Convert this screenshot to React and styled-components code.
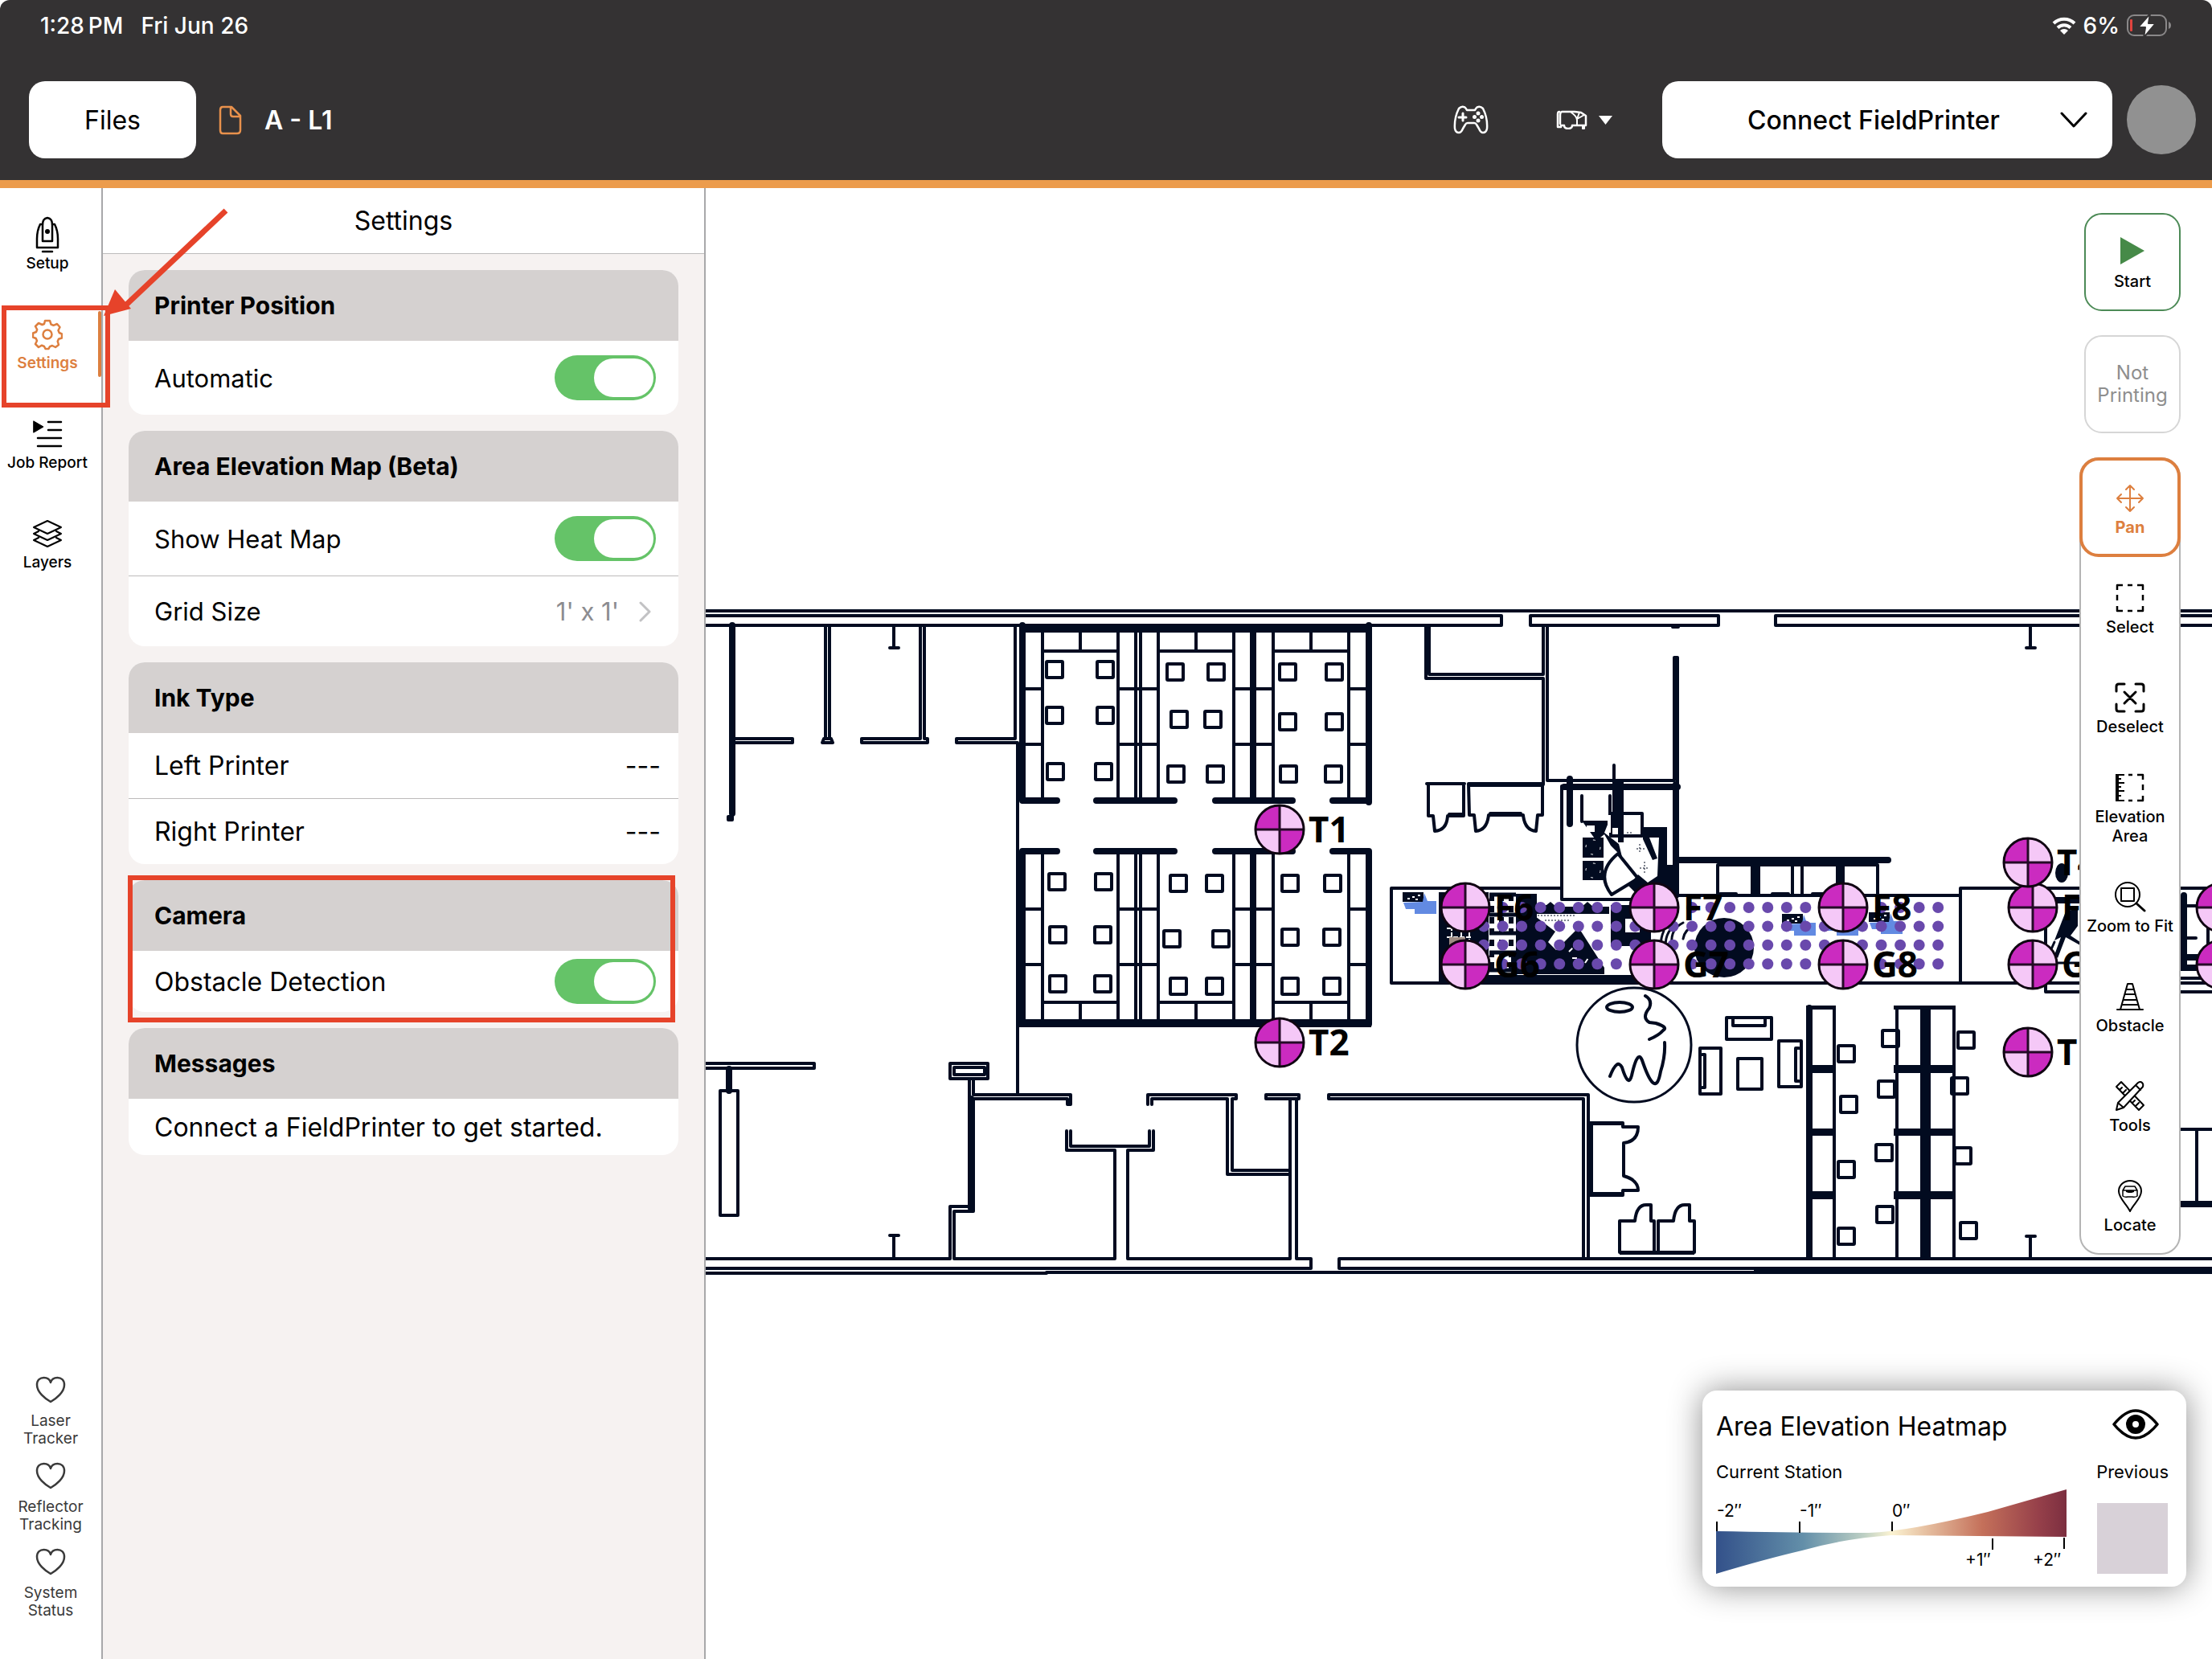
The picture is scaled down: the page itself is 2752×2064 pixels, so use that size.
import React, { useState } from 'react'
import styled, { createGlobalStyle, css } from 'styled-components'

const INK = '#020b20'
const ORANGE = '#dd7f3f'
const RED = '#e6432a'

const GlobalStyle = createGlobalStyle`
  * { box-sizing: border-box; }
  body {
    margin: 0;
    background: #fff;
    color: #000;
    font-family: Inter, "Liberation Sans", sans-serif;
  }
  button, select, input { font: inherit; color: inherit; margin: 0; }
  button { background: none; border: 0; padding: 0; cursor: pointer; }
`

/* ---------- page ---------- */

const Page = styled.div`
  display: flex;
  flex-direction: column;
  min-height: 100vh;
`

const Header = styled.header`
  background: #343233;
  color: #fff;
  border-bottom: 10px solid #ec9c4c;
  border-radius: 12px 12px 0 0;
`

const StatusBar = styled.div`
  display: flex;
  align-items: center;
  justify-content: space-between;
  height: 64px;
  padding: 0 50px;
  font-size: 28px;
  font-weight: 500;
`

const StatusGroup = styled.div`
  display: flex;
  align-items: center;
  gap: ${p => p.$gap}px;
`

const TopBar = styled.div`
  display: flex;
  align-items: center;
  height: 160px;
  padding: 10px 20px 0 36px;
`

const FilesButton = styled.button`
  width: 208px;
  height: 96px;
  border-radius: 20px;
  background: #fff;
  color: #000;
  font-size: 32px;
`

const FileName = styled.h1`
  flex: 1;
  display: flex;
  align-items: center;
  gap: 28px;
  margin: 0 0 0 28px;
  font-size: 32px;
  font-weight: 600;
`

const BarButton = styled.button`
  display: flex;
  align-items: center;
  gap: 14px;
  margin-right: ${p => p.$after}px;
`

const Connect = styled.label`
  display: grid;
  align-items: center;
  width: 560px;
  height: 96px;
  margin-right: 18px;
  border-radius: 20px;
  background: #fff;
  color: #000;

  select {
    grid-area: 1 / 1;
    height: 100%;
    padding: 0 34px 0 0;
    border: 0;
    border-radius: 20px;
    background: transparent;
    appearance: none;
    text-align: center;
    text-align-last: center;
    font-size: 32px;
    font-weight: 500;
  }
  svg {
    grid-area: 1 / 1;
    justify-self: end;
    margin-right: 31px;
    pointer-events: none;
  }
`

const Avatar = styled.button`
  width: 86px;
  height: 86px;
  border-radius: 50%;
  background: #919191;
`

const Body = styled.div`
  flex: 1;
  display: flex;
`

/* ---------- left rail ---------- */

const SideNav = styled.nav`
  display: flex;
  flex-direction: column;
  justify-content: space-between;
  width: 128px;
  padding: 34px 0 31px;
  border-right: 2px solid #a8a8aa;
  background: #fff;
`

const NavItem = styled.button`
  position: relative;
  display: flex;
  flex-direction: column;
  align-items: center;
  width: 118px;
  height: 124px;
  font-size: 19px;
  line-height: 24px;
  font-weight: 500;
  white-space: nowrap;

  svg { height: 48px; }

  ${p => p.$active && css`
    color: ${ORANGE};
    font-weight: 600;
    &::after {
      content: '';
      position: absolute;
      top: -5px;
      right: -8px;
      width: 4px;
      height: 82px;
      border-radius: 2px;
      background: ${ORANGE};
    }
  `}
`

const Health = styled.div`
  display: flex;
  flex-direction: column;
  align-items: center;
  height: 107px;
  padding: 0 18px;
  color: #3a3a3a;
  font-size: 19px;
  line-height: 22px;
  text-align: center;

  svg { margin-bottom: 11px; }
`

/* ---------- settings panel ---------- */

const Panel = styled.aside`
  width: 750px;
  border-right: 2px solid #a8a8aa;
  background: #f6f2f1;
`

const PanelTitle = styled.h2`
  display: flex;
  align-items: center;
  justify-content: center;
  height: 82px;
  margin: 0;
  border-bottom: 1px solid #bdbbbb;
  background: #fff;
  font-size: 32px;
  font-weight: 400;
`

const Cards = styled.div`
  display: flex;
  flex-direction: column;
  gap: 20px;
  padding: 20px 32px;
`

const CardBox = styled.section`
  position: relative;
  border-radius: 20px;
  background: #fff;
`

const CardTitle = styled.h3`
  display: flex;
  align-items: center;
  height: 88px;
  margin: 0;
  padding: 0 32px;
  border-radius: 20px 20px 0 0;
  background: #d5d1d0;
  font-size: 30px;
  font-weight: 700;
`

const Row = styled.div`
  display: flex;
  align-items: center;
  justify-content: space-between;
  height: ${p => p.$h}px;
  padding: 0 ${p => p.$end || 28}px 0 32px;
  font-size: ${p => (p.$h > 84 ? 31 : 32)}px;

  & + & { border-top: 1px solid #bdbbbb; }
`

const Switch = styled.input`
  appearance: none;
  width: 126px;
  height: 56px;
  padding: 4px 3px;
  border-radius: 28px;
  background: #c9c9cb;
  cursor: pointer;

  &::before {
    content: '';
    display: block;
    width: 74px;
    height: 48px;
    border-radius: 24px;
    background: #fff;
  }
  &:checked { background: #65c368; }
  &:checked::before { margin-left: auto; }
`

const ValueButton = styled.button`
  display: flex;
  align-items: center;
  gap: 24px;
  color: #8c8c90;
`

/* red call-outs lie over the controls that they point at */
const Callout = styled.span`
  position: absolute;
  inset: ${p => p.$inset};
  z-index: 2;
  border: 6px solid ${RED};
  pointer-events: none;
`

const ArrowMark = styled.svg`
  position: absolute;
  top: -136px;
  left: 124px;
  z-index: 3;
  pointer-events: none;
  && { height: 144px; }
`

/* ---------- map ---------- */

const Stage = styled.main`
  position: relative;
  flex: 1;
  min-width: 0;
  overflow: hidden;
`

const MapSvg = styled.svg`
  position: absolute;
  inset: 0;
  width: 100%;
  height: 100%;

  text {
    font-family: "Noto Sans", "Open Sans", sans-serif;
    font-size: 44px;
    font-weight: 700;
  }
`

const ToolRail = styled.div`
  position: absolute;
  top: 31px;
  right: 39px;
  display: flex;
  flex-direction: column;
  align-items: flex-end;
  width: 126px;
`

const RunButton = styled.button`
  display: flex;
  flex-direction: column;
  align-items: center;
  justify-content: center;
  gap: 6px;
  width: 120px;
  height: 122px;
  margin-bottom: 30px;
  padding-top: ${p => (p.disabled ? 0 : 6)}px;
  border: 2px solid ${p => (p.disabled ? '#d6d6d6' : '#4c8a56')};
  border-radius: 22px;
  background: #fff;
  color: ${p => (p.disabled ? '#8e8e8e' : '#000')};
  font-size: ${p => (p.disabled ? 24 : 20)}px;
  line-height: 28px;
  font-weight: ${p => (p.disabled ? 400 : 500)};
`

const ToolBox = styled.div`
  width: 126px;
  border-radius: 24px;
  background: #fff;
  box-shadow: inset 0 0 0 2px #b4b4b4;
`

const Tool = styled.button`
  display: flex;
  flex-direction: column;
  align-items: center;
  justify-content: center;
  gap: 3px;
  width: 126px;
  height: 124px;
  padding-top: 4px;
  border: 4px solid ${p => (p.$active ? ORANGE : 'transparent')};
  border-radius: 24px;
  color: ${p => (p.$active ? ORANGE : '#000')};
  font-size: 20px;
  line-height: 24px;
  font-weight: ${p => (p.$active ? 700 : 500)};
`

/* ---------- heat map legend ---------- */

const Legend = styled.section`
  position: absolute;
  right: 32px;
  bottom: 90px;
  width: 602px;
  height: 244px;
  padding: 20px 22px 0 17px;
  border-radius: 18px;
  background: #fff;
  box-shadow: 0 0 40px rgba(0, 0, 0, 0.45);
`

const LegendHead = styled.div`
  display: flex;
  align-items: center;
  justify-content: space-between;
  height: 48px;
  padding-right: 12px;

  h2 {
    margin: 0;
    font-size: 32px;
    font-weight: 400;
  }
`

const LegendBody = styled.div`
  display: flex;
  justify-content: space-between;
  margin-top: 20px;
  font-size: 22px;
  line-height: 26px;
`

const LegendColumn = styled.div`
  display: flex;
  flex-direction: column;
  align-items: ${p => p.$align};

  svg { margin-top: 6px; }
  text { font-size: 21px; }
`

const Swatch = styled.div`
  width: 88px;
  height: 88px;
  margin-top: 26px;
  background: #d8d1d8;
`

/* ---------- icons ---------- */

const Icon = ({ w, h, sw = 2.5, children, ...rest }) => (
  <svg
    width={w}
    height={h}
    viewBox={`0 0 ${w} ${h}`}
    fill="none"
    stroke="currentColor"
    strokeWidth={sw}
    strokeLinecap="round"
    strokeLinejoin="round"
    aria-hidden="true"
    {...rest}
  >
    {children}
  </svg>
)

const WifiIcon = () => (
  <Icon w={30} h={24} sw={4} strokeLinecap="butt">
    <path d="M2 9a18.500 18.500 0 0 1 26 0M7 14.500a11.500 11.500 0 0 1 16 0" />
    <path d="M15 23l-5-5a7 7 0 0 1 10 0z" fill="currentColor" stroke="none" />
  </Icon>
)

const BatteryIcon = () => (
  <Icon w={56} h={30} sw={2}>
    <rect x="1" y="2" width="48" height="25" rx="8" stroke="#8a8889" />
    <path d="M52 10v9q3-1 3-4.500t-3-4.500z" fill="#8a8889" stroke="none" />
    <rect x="4" y="7" width="3" height="15" rx="1" fill="#e0443e" stroke="none" />
    <path d="M29 0L14 17h9l-2 13 15-18h-9z" fill="#fff" stroke="#343233" />
  </Icon>
)

const FileIcon = () => (
  <Icon w={29} h={37} color="#e8914c">
    <path d="M5 2h11l11 11v18q0 4-4 4H5q-3 0-3-4V6q0-4 3-4zM15 2v9q0 3 3 3h9" />
  </Icon>
)

const GamepadIcon = () => (
  <Icon w={44} h={36}>
    <path d="M13 2q-3-1-6 2Q1 16 2 29q1 5 5 5 3 0 5-5l3-5q1-2 3-2h8q2 0 3 2l3 5q2 5 5 5 4 0 5-5 1-13-5-25-3-3-6-2-2 0-4 4H17q-2-4-4-4z" />
    <path d="M7 15h9M12 10v9" strokeWidth="3" />
    <g fill="currentColor" stroke="none">
      <circle cx="31" cy="10" r="2.500" />
      <circle cx="31" cy="19" r="2.500" />
      <circle cx="26.500" cy="14.500" r="2.500" />
      <circle cx="35.500" cy="14.500" r="2.500" />
    </g>
  </Icon>
)

const RobotIcon = () => (
  <Icon w={40} h={24}>
    <path d="M5 2q-2 0-2 3v16h4v-2h4q0 4 5 4t5-4h17V7l-6-4-8-1H8q-2 1-2 4v11" />
    <path d="M20 3q6 4 7 9v6M27 11l9-5M27 11l3-8M34 19v4h2v-4" strokeWidth="2" />
  </Icon>
)

const SetupIcon = () => (
  <Icon w={30} h={44}>
    <path d="M9 9H6Q2 17 2 27v11h26V27q0-10-4-18h-3" />
    <path d="M9 30V9q0-7 6-8 6 1 6 8v21z" />
    <circle cx="15" cy="18" r="3" fill="currentColor" stroke="none" />
    <path d="M9 43h12" />
  </Icon>
)

const GearIcon = () => (
  <Icon w={38} h={38}>
    <circle cx="19" cy="19" r="5.500" />
    <path d="M16 2h6l1.500 4.500 3 1.300L31 6l3.500 4-2 4 1.200 3L37 18.500v5l-4 1.200-1.300 3L33 32l-4 3-4-2-3 1.200-1.500 2.800h-4L15 34l-3-1.300L8 35l-4-4 2-4-1.300-3L1 22.500v-5L5 16l1.200-3L4 9l4-4 4.500 2 2.500-1z" />
  </Icon>
)

const ReportIcon = () => (
  <Icon w={38} h={36}>
    <path d="M2 2l12 7-12 7z" fill="currentColor" strokeWidth="1" />
    <path d="M20 3h16M20 13h16M7 23h29M7 33h29" />
  </Icon>
)

const LayersIcon = () => (
  <Icon w={38} h={36}>
    <path d="M19 2L2 10l17 8 17-8zM8 15l-6 3 17 8 17-8-6-3M8 23l-6 3 17 8 17-8-6-3" strokeWidth="2" />
  </Icon>
)

const HeartIcon = () => (
  <Icon w={38} h={34}>
    <path d="M19 32C12 28 2 20 2 11 2 5 6 2 10.500 2 15 2 18 4.500 19 8c1-3.500 4-6 8.500-6C32 2 36 5 36 11c0 9-10 17-17 21z" />
  </Icon>
)

const PanIcon = () => (
  <Icon w={36} h={42} sw={2}>
    <path d="M18 5v32M2 21h32M13 10l5-5 5 5M13 32l5 5 5-5M7 16l-5 5 5 5M29 16l5 5-5 5" />
  </Icon>
)

const SelectIcon = () => (
  <Icon w={36} h={42} strokeLinecap="butt">
    <path d="M9 5H2v6M15 5h6M27 5h7v6M34 17v7M34 31v6h-7M21 37h-6M9 37H2v-6M2 24v-7" />
  </Icon>
)

const DeselectIcon = () => (
  <Icon w={38} h={42} sw={3}>
    <path d="M12 4H5q-3 0-3 3v6M26 4h7q3 0 3 3v6M36 29v6q0 3-3 3h-7M12 38H5q-3 0-3-3v-6M12 14l14 14M26 14L12 28" />
  </Icon>
)

const ElevationIcon = () => (
  <Icon w={36} h={42} strokeLinecap="butt">
    <path d="M2 4v34" strokeWidth="4" />
    <path d="M2 5h9M2 10h5M2 15h9M2 20h5M2 25h9M2 31h5M2 37h9" strokeWidth="2" />
    <path d="M16 5h5M27 5h7v6M34 17v7M34 31v6h-7M21 37h-5" />
  </Icon>
)

const ZoomIcon = () => (
  <Icon w={40} h={42} sw={2}>
    <circle cx="17" cy="18" r="15" />
    <rect x="9" y="10" width="16" height="16" />
    <path d="M28 29l10 9" strokeWidth="3" />
  </Icon>
)

const ConeIcon = () => (
  <Icon w={34} h={42} sw={2}>
    <path d="M1 37h32M5 37L14 5h6l9 32M13 12h8M11 18h12M9 25h16M7 31h20" />
  </Icon>
)

const ToolsIcon = () => (
  <Icon w={38} h={42} sw={2}>
    <path d="M8 3L2 9l28 29 6-6zM6 13l3-3M10 17l4-4M14 21l3-3M22 29l3-3M26 33l4-4" />
    <path d="M2 38l2-9L29 4q3-2 5 0t1 5L11 35zM4 29l7 6M26 7l6 6" fill="#fff" />
  </Icon>
)

const LocateIcon = () => (
  <Icon w={32} h={42} sw={2}>
    <path d="M16 40C12 31 2 24 2 15a14 13 0 0 1 28 0c0 9-10 16-14 25z" />
    <path d="M10 9h12l3 5v7q-3 2-6 1h-6q-3 1-6-1v-7zM7 14h18" strokeWidth="1.500" />
    <path d="M11 14h10v2l-3 1h-4l-3-1z" fill="currentColor" stroke="none" />
  </Icon>
)

const EyeIcon = () => (
  <Icon w={58} h={38} sw={3.5}>
    <path d="M2 19Q16 2 29 2t27 17Q42 36 29 36T2 19z" />
    <circle cx="29" cy="19" r="8" strokeWidth="8" />
  </Icon>
)

/* ---------- floor plan data (plan units) ---------- */

const chairs = [
  [1312, 833], [1375, 833], [1312, 890], [1375, 890], [1313, 960], [1373, 960],
  [1462, 836], [1513, 836], [1467, 895], [1509, 895], [1463, 963], [1512, 963],
  [1602, 836], [1660, 836], [1602, 898], [1660, 898], [1603, 963], [1659, 963],
  [1315, 1097], [1373, 1097], [1316, 1163], [1372, 1163], [1316, 1224], [1372, 1224],
  [1466, 1099], [1511, 1099], [1458, 1168], [1519, 1168], [1466, 1227], [1511, 1227],
  [1605, 1099], [1658, 1099], [1605, 1166], [1657, 1166], [1605, 1227], [1657, 1227],
  [2297, 1311], [2300, 1374], [2297, 1455], [2297, 1538],
  [2352, 1292], [2347, 1355], [2344, 1434], [2345, 1511],
  [2446, 1294], [2438, 1351], [2442, 1438], [2449, 1531]
]

const targets = [
  ['T1', 1592, 1032], ['T2', 1592, 1297],
  ['F6', 1823, 1129], ['G6', 1823, 1200],
  ['F7', 2058, 1129], ['G7', 2058, 1200],
  ['F8', 2293, 1129], ['G8', 2293, 1200],
  ['F', 2529, 1129], ['G', 2529, 1200],
  ['T4', 2523, 1073], ['T', 2523, 1309],
  ['', 2763, 1129], ['', 2763, 1200]
]

const dots = []
for (let row = 0; row < 4; row++) {
  for (let col = row === 0 || row === 3 ? 1 : 0; col < 25; col++) {
    dots.push([1846 + col * 23.55, 1129 + row * 23.4])
  }
}

// outer shell, rooms and partitions
const walls = `
M878 760H2752
M878 766H1868V778H878
M2752 766H2209V778H2752
M1904 766H2138V778H1904Z
M914 919H986V924H914
M1027 778V917M1032 778V917M1025 919H1034L1036 924H1023Z
M1145 778V919H1072V924H1154V919H1150V778
M1263 778V919H1190V924H1266
M1266 924V1361
M906 1016H911V1020H906Z
M878 1323H1013V1329H878
M896 1357H918V1512H896Z
M1182 1323H1229V1342H1182Z M1187 1328H1225V1337H1187Z
M1206 1342V1501H1182V1566
M1211 1342V1362H1332V1374H1328V1367H1211V1507H1187V1566
M1428 1374V1362H1538V1367H1533V1456H1605M1433 1374V1367H1527V1461H1605
M1575 1362H1616V1367H1575Z
M1605 1367V1566M1613 1367V1566
M1976 1564V1362H1653V1367H1970V1564
M1327 1407V1431H1387V1566M1332 1407V1426H1430V1407M1435 1407V1431H1403V1566
M878 1566H1182M1187 1566H1387M1403 1566H1605M1613 1566H1631V1578H878
M2752 1566H1666V1578H2752
M878 1584H1302M1302 1583H2752
M1112 780V806M1107 806H1118M1112 1566V1537M1107 1537H1118
M2526 780V806M2521 806H2532M2526 1566V1538M2521 1538H2532
M1774 778V844H1920V976M1778 778V839H1920V778
M1925 778V971H2083V818H2087V976
M2081 780H2088
M1943 1105H1731V1223H2752
M1943 978V1119H2044M2044 1114H2439
M2752 1105H2439V1223
M2545 1155V1234H2752
M2713 1217H2752M2713 1405H2752M2733 1405V1498
M2718 1127H2736M2718 1167H2732M2747 1127V1190`

// benches between the two desk blocks and their dividers
const desks = `
M1297 785V996M1391 785V996M1441 785V996M1535 785V996M1584 785V996M1678 785V996
M1344 785V810M1488 785V810M1631 785V810
M1297 810H1391M1441 810H1535M1584 810H1678
M1273 857H1297M1391 857H1441M1535 857H1584M1678 857H1703
M1273 926H1297M1391 926H1441M1535 926H1584M1678 926H1703
M1297 1063V1272M1391 1063V1272M1441 1063V1272M1535 1063V1272M1584 1063V1272M1678 1063V1272
M1344 1247V1272M1488 1247V1272M1631 1247V1272
M1297 1247H1391M1441 1247H1535M1584 1247H1678
M1273 1131H1297M1391 1131H1441M1535 1131H1584M1678 1131H1703
M1273 1200H1297M1391 1200H1441M1535 1200H1584M1678 1200H1703
M1413 785V996M1419 785V996M1413 1063V1272M1419 1063V1272`

const heavy = `
M1272 778V996M1559 785V996M1703 778V998
M1272 1059V1274M1559 1063V1272M1703 1059V1274
M1272 996H1315M1364 996H1461M1512 996H1608M1658 996H1703
M1272 1059H1315M1364 1059H1461M1512 1059H1608M1658 1059H1703
M911 778V1012M1208 1367V1503M907 1330V1357
M2085 976V1114M2088 1070H2349M1946 979H2087
M1953 969V1025
M2553 1120H2588M2717 1114V1204M2713 1191H2736M2713 1204H2736M2713 1498H2752
M2251 1254V1564`

const furniture = `
M1775 975H1822M1777 977V1015H1783L1785 1034Q1800 1033 1801 1015H1821V975M1803 1013H1820
M1827 975H1919V1014H1913L1911 1034Q1897 1033 1895 1014H1852Q1850 1033 1836 1034L1834 1014H1828ZM1827 977H1918M1854 1012H1892
M1968 990V1022M2003 990V1020M2008 952V1000
M2004 1012H2043V1040H2004Z
M2038 1093L2013 1062Q1984 1086 2005 1113Z
M2137 1112V1076H2336V1112M2230 1076V1112M2242 1076V1112M2140 1112H2160M2205 1112H2225M2255 1112H2280
M2148 1266H2204V1293H2148ZM2156 1268V1276H2196V1268
M2115 1304H2141V1361H2115ZM2118 1312H2121V1353H2118
M2213 1295H2241V1352H2213ZM2238 1304H2234V1345H2238
M2162 1317H2192V1355H2162Z
M2251 1253H2282V1564M2360 1564V1253H2431V1564
M1980 1397H2019V1402H2038Q2038 1420 2020 1422V1463Q2038 1468 2038 1481H2019V1487H1980Z
M2015 1519H2034Q2036 1499 2048 1499H2054V1519H2058V1558H2015Z
M2063 1519H2082Q2084 1499 2096 1499H2102V1519H2108V1558H2063Z
M2047 1239Q2056 1244 2052 1254Q2042 1266 2052 1272L2060 1273Q2076 1278 2069 1282Q2064 1288 2052 1293
M2003 1339Q2012 1316 2018 1328Q2026 1354 2030 1338Q2038 1302 2044 1322Q2060 1368 2066 1333Q2072 1314 2071 1297`

// filled shapes: thick walls, shelves and the lobby graphics
const solids = `
M1268 776H1706V787H1268ZM1268 1268H1706V1278H1268Z
M2182 1577H2752V1585H2182Z
M2178 1074H2190V1114H2178ZM2284 1074H2295V1114H2284ZM2389 1253H2402V1566H2389Z
M2247 1251H2284V1256H2247ZM2247 1325H2284V1335H2247ZM2247 1404H2284V1413H2247ZM2247 1482H2284V1492H2247Z
M2356 1251H2433V1256H2356ZM2356 1325H2433V1335H2356ZM2356 1404H2433V1413H2356ZM2356 1482H2433V1492H2356Z
M1978 1395H2019V1400H1978ZM1978 1483H2019V1489H1978ZM2015 1556H2108V1561H2015Z
M2006 970H2020V1048H2013V1030H2006Z
M1968 1021H2002L1996 1036L2014 1050L2018 1066L2004 1052L1996 1038L1986 1046Z
M1969 1042H1995V1067H1969ZM1969 1071H1995V1095H1969Z
M2044 1029H2074V1076H2088V1116H2040L2026 1102L2038 1088L2050 1098L2062 1090L2064 1042H2052L2062 1068L2056 1070L2044 1044Z
M1790 1110H1852V1215H1790ZM1886 1112H1912V1212H1886Z
M1911 1136L1916 1126H1924L1929 1122L1936 1128H1968L1975 1122L1982 1128H2002V1137H1911Z
M1910 1140L1935 1159L1926 1172L1936 1182L1964 1154L1996 1204V1212H1880V1186L1910 1172Z
M2004 1126H2060V1160H2040V1143H2022V1160H2054V1177H2004Z
M1790 1213H2048V1223H1790Z
M2556 1170L2570 1134L2585 1130V1152L2576 1164L2588 1172V1176L2570 1166L2560 1192L2556 1188L2564 1166Z`

/* ---------- map parts ---------- */

const Target = ({ name, x, y }) => (
  <g transform={`translate(${x} ${y})`}>
    <circle r="30" fill="#f5c8f7" />
    <path d="M0 0H-30A30 30 0 0 1 0-30ZM0 0H30A30 30 0 0 1 0 30Z" fill="#cb2bc0" />
    <path d="M-30 0H30M0-30V30" stroke="#240a26" strokeWidth="3" />
    <circle r="30" fill="none" stroke="#100512" strokeWidth="3" />
    {name && <text x="36" y="16">{name}</text>}
  </g>
)

const Figure = ({ x, y }) => (
  <g transform={`translate(${x} ${y})`}>
    <path d="M0 0h26v12H0z" fill={INK} />
    <path d="M1 13l24-1 2-11 4 10h11v16H15v-6H4z" fill="#628ae2" />
    <path d="M6 8h3M12 6h3M16 9h3M19 4h3" stroke="#fff" strokeWidth="2" />
  </g>
)

const FloorPlan = () => (
  <MapSvg viewBox="878 234 1874 1830" preserveAspectRatio="xMinYMin slice" role="img" aria-label="Floor plan">
    <g fill="none" stroke={INK} strokeWidth="4" strokeLinejoin="round" strokeLinecap="round">
      <path d={walls} />
      <path d={desks} />
      <path d={heavy} strokeWidth="8" />
      <path d={furniture} />
      {chairs.map(([x, y]) => (
        <rect key={`${x}-${y}`} x={x - 10} y={y - 10} width="20" height="20" rx="1" />
      ))}
      <circle cx="2033" cy="1300" r="71" strokeWidth="3" />
      <ellipse cx="2015" cy="1253" rx="16" ry="6" />
      <path d="M2070 1158q-8 18 2 34M2082 1152q-14 14-8 34M2094 1148q-16 8-14 26M2108 1152q-12 4-14 16" strokeWidth="3" />
      <path d="M2556 1172L2547 1192M2548 1198H2588" strokeWidth="3" />
    </g>
    <path d={solids} fill={INK} />
    <circle cx="2145" cy="1179" r="37" fill={INK} />
    <ellipse cx="2565" cy="1086" rx="8" ry="12" fill={INK} />
    {/* floor pattern and equipment highlights */}
    <path
      d="M1856 1113V1208M1868 1113V1208M1880 1113V1208"
      stroke={INK}
      strokeWidth="6"
      strokeDasharray="8 6"
    />
    <path d="M1853 1113H1886M1853 1138H1886M1853 1161H1886M1853 1185H1886M1853 1207H1886" stroke={INK} strokeWidth="5" />
    <path
      d="M1800 1155H1836M1800 1166H1832M1806 1152V1170M1818 1152V1170M1828 1152V1170M1952 1184l8-8M1956 1192h6M1972 1198l4-6"
      stroke="#fff"
      strokeWidth="2"
      strokeDasharray="6 2"
    />
    <path d="M1913 1139H1960M1922 1145H1952M2024 1036H2032M2036 1056H2048M2040 1050V1062M2046 1072V1086M2040 1080H2052" stroke={INK} strokeDasharray="2 2" />
    <path d="M1974 1027h10v8h-10zM2000 1014h4v22h-4z" fill="#fff" />
    <path d="M1803 1166h20v12h-20z" fill="#a08c84" />
    <g fill="none" stroke="#fff">
      <circle cx="1982" cy="1054" r="9" strokeDasharray="3 11" />
      <circle cx="1982" cy="1083" r="9" strokeDasharray="3 11" />
    </g>
    <Figure x={1745} y={1110} />
    <Figure x={2217} y={1137} />
    <Figure x={2270} y={1137} />
    <Figure x={2325} y={1135} />
    <g fill="#6949ac">
      {dots.map(([x, y]) => <circle key={`${x}-${y}`} cx={x} cy={y} r="7" />)}
    </g>
    {targets.map(([name, x, y]) => (
      <Target key={`${x}-${y}`} name={name} x={x} y={y} />
    ))}
  </MapSvg>
)

const HeatScale = () => (
  <svg width="438" height="110" viewBox="0 0 438 110" role="img" aria-label="Elevation scale">
    <defs>
      <linearGradient id="heat">
        <stop offset="0" stopColor="#33518a" />
        <stop offset="0.25" stopColor="#638fa9" />
        <stop offset="0.42" stopColor="#bccfc4" />
        <stop offset="0.5" stopColor="#fbf3d2" />
        <stop offset="0.6" stopColor="#e6bfa0" />
        <stop offset="0.76" stopColor="#c4705a" />
        <stop offset="0.92" stopColor="#96404a" />
        <stop offset="1" stopColor="#7c2f40" />
      </linearGradient>
    </defs>
    <path d="M0 55Q110 57 190 57Q240 55 338 31L436 3V62L218 60Q160 64 107 79Q60 90 0 108Z" fill="url(#heat)" />
    <path d="M1 43V55M104 43V57M219 43V55M344 64V78M433 63V77" stroke="#000" strokeWidth="2" />
    <text x="1" y="37">-2″</text>
    <text x="104" y="37">-1″</text>
    <text x="219" y="37">0″</text>
    <text x="310" y="98">+1″</text>
    <text x="394" y="98">+2″</text>
  </svg>
)

/* ---------- app ---------- */

const navItems = [
  ['Setup', SetupIcon],
  ['Settings', GearIcon],
  ['Job Report', ReportIcon],
  ['Layers', LayersIcon]
]

const tools = [
  ['Pan', PanIcon],
  ['Select', SelectIcon],
  ['Deselect', DeselectIcon],
  ['Elevation Area', ElevationIcon],
  ['Zoom to Fit', ZoomIcon],
  ['Obstacle', ConeIcon],
  ['Tools', ToolsIcon],
  ['Locate', LocateIcon]
]

const Card = ({ title, children }) => (
  <CardBox>
    <CardTitle>{title}</CardTitle>
    {children}
  </CardBox>
)

const SwitchRow = ({ id, label, h }) => {
  const [on, setOn] = useState(true)
  return (
    <Row $h={h}>
      <label htmlFor={id}>{label}</label>
      <Switch id={id} type="checkbox" role="switch" checked={on} onChange={e => setOn(e.target.checked)} />
    </Row>
  )
}

const App = () => {
  const [tool, setTool] = useState('Pan')

  return (
    <Page>
      <GlobalStyle />
      <Header>
        <StatusBar>
          <StatusGroup $gap={22}>
            <span>1:28{'\u202f'}PM</span>
            <span>Fri Jun 26</span>
          </StatusGroup>
          <StatusGroup $gap={9}>
            <WifiIcon />
            <span>6%</span>
            <BatteryIcon />
          </StatusGroup>
        </StatusBar>
        <TopBar>
          <FilesButton>Files</FilesButton>
          <FileName>
            <FileIcon />
            A - L1
          </FileName>
          <BarButton $after={83} aria-label="Remote control">
            <GamepadIcon />
          </BarButton>
          <BarButton $after={62} aria-label="Printers">
            <RobotIcon />
            <Icon w={17} h={11}>
              <path d="M0 0h17L8.500 11z" fill="currentColor" stroke="none" />
            </Icon>
          </BarButton>
          <Connect>
            <select aria-label="FieldPrinter" defaultValue="none">
              <option value="none">Connect FieldPrinter</option>
            </select>
            <Icon w={34} h={20} sw={3}>
              <path d="M2 2l15 16L32 2" />
            </Icon>
          </Connect>
          <Avatar aria-label="Account" />
        </TopBar>
      </Header>

      <Body>
        <SideNav>
          <div>
            {navItems.map(([label, Glyph]) => (
              <NavItem key={label} $active={label === 'Settings'}>
                <Glyph />
                {label}
                {label === 'Settings' && (
                  <>
                    <Callout $inset="-12px -19px 9px 2px" />
                    <ArrowMark width="164" height="144" viewBox="0 0 164 144">
                      <path d="M157 6L30 126" stroke={RED} strokeWidth="7" />
                      <path d="M5 137L19 104L39 128Z" fill={RED} />
                    </ArrowMark>
                  </>
                )}
              </NavItem>
            ))}
          </div>
          <div>
            {['Laser Tracker', 'Reflector Tracking', 'System Status'].map(label => (
              <Health key={label}>
                <HeartIcon />
                {label}
              </Health>
            ))}
          </div>
        </SideNav>

        <Panel>
          <PanelTitle>Settings</PanelTitle>
          <Cards>
            <Card title="Printer Position">
              <SwitchRow id="auto" label="Automatic" h={92} />
            </Card>
            <Card title="Area Elevation Map (Beta)">
              <SwitchRow id="heatmap" label="Show Heat Map" h={92} />
              <Row $h={88} $end={34}>
                <span>Grid Size</span>
                <ValueButton>
                  1' x 1'
                  <Icon w={16} h={26} sw={3} color="#c2c2c4">
                    <path d="M3 2l11 11L3 24" />
                  </Icon>
                </ValueButton>
              </Row>
            </Card>
            <Card title="Ink Type">
              <Row $h={81} $end={22}>
                <span>Left Printer</span>
                <span>---</span>
              </Row>
              <Row $h={82} $end={22}>
                <span>Right Printer</span>
                <span>---</span>
              </Row>
            </Card>
            <Card title="Camera">
              <SwitchRow id="obstacle" label="Obstacle Detection" h={76} />
              <Callout $inset="-6px 4px -13px -1px" />
            </Card>
            <Card title="Messages">
              <Row $h={70}>Connect a FieldPrinter to get started.</Row>
            </Card>
          </Cards>
        </Panel>

        <Stage>
          <FloorPlan />
          <ToolRail>
            <RunButton>
              <Icon w={32} h={36} color="#468a48">
                <path d="M1 1l30 17L1 35z" fill="currentColor" stroke="none" />
              </Icon>
              Start
            </RunButton>
            <RunButton disabled>Not Printing</RunButton>
            <ToolBox>
              {tools.map(([label, Glyph]) => (
                <Tool key={label} $active={tool === label} onClick={() => setTool(label)}>
                  <Glyph />
                  <span>{label}</span>
                </Tool>
              ))}
            </ToolBox>
          </ToolRail>
          <Legend>
            <LegendHead>
              <h2>Area Elevation Heatmap</h2>
              <button aria-label="Toggle heatmap"><EyeIcon /></button>
            </LegendHead>
            <LegendBody>
              <LegendColumn $align="flex-start">
                Current Station
                <HeatScale />
              </LegendColumn>
              <LegendColumn $align="center">
                Previous
                <Swatch />
              </LegendColumn>
            </LegendBody>
          </Legend>
        </Stage>
      </Body>
    </Page>
  )
}

export default App
